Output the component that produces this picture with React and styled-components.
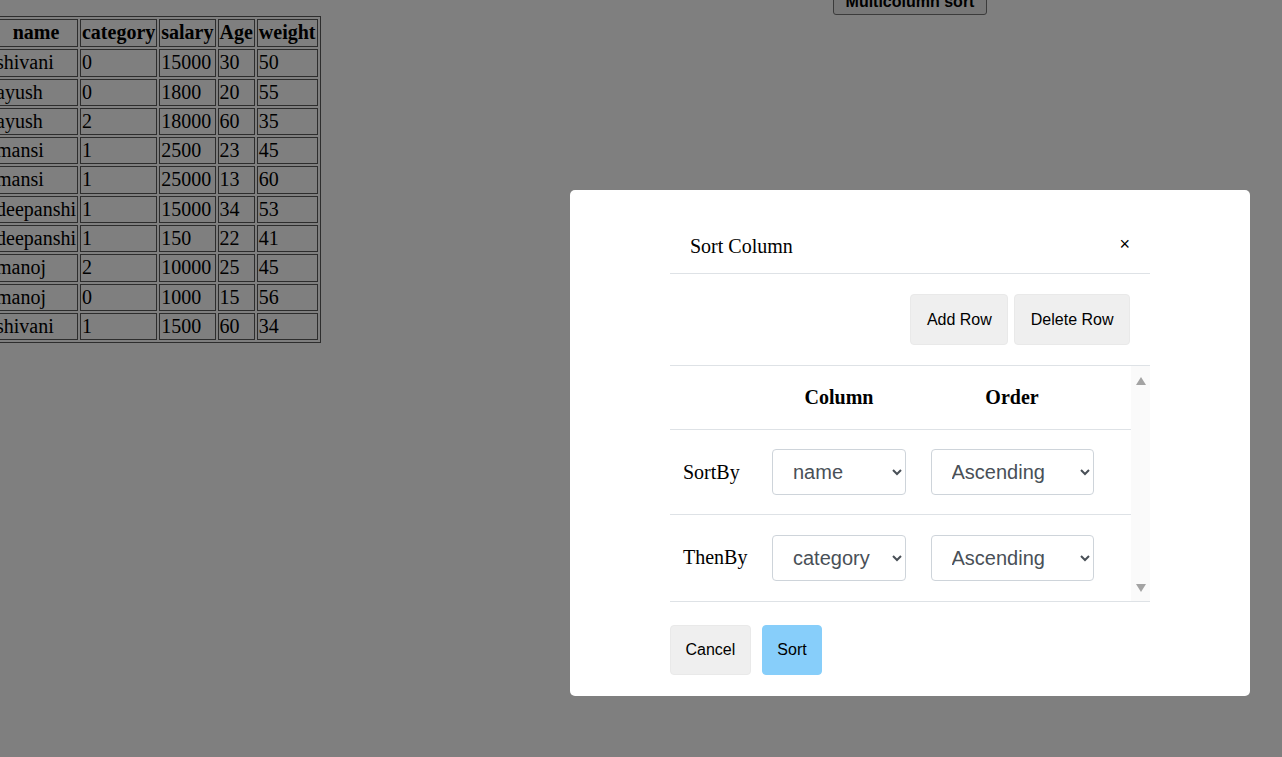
import styled, { createGlobalStyle } from 'styled-components';

const rows = [
  ['shivani', 0, 15000, 30, 50],
  ['ayush', 0, 1800, 20, 55],
  ['ayush', 2, 18000, 60, 35],
  ['mansi', 1, 2500, 23, 45],
  ['mansi', 1, 25000, 13, 60],
  ['deepanshi', 1, 15000, 34, 53],
  ['deepanshi', 1, 150, 22, 41],
  ['manoj', 2, 10000, 25, 45],
  ['manoj', 0, 1000, 15, 56],
  ['shivani', 1, 1500, 60, 34],
];

const sortRows = [
  { label: 'SortBy', column: 'name' },
  { label: 'ThenBy', column: 'category' },
];

const GlobalStyle = createGlobalStyle`
  html, body {
    margin: 0;
    padding: 0;
    background: #fff;
  }
  body {
    font-family: "Liberation Serif", "Times New Roman", serif;
    overflow: hidden;
  }
`;

function App() {
  return (
    <>
      <GlobalStyle />
      <Page>
        <TopBar>
          <MultiButton>Multicolumn sort</MultiButton>
        </TopBar>
        <DataTable>
          <thead>
            <tr>
              <th>name</th>
              <th>category</th>
              <th>salary</th>
              <th>Age</th>
              <th>weight</th>
            </tr>
          </thead>
          <tbody>
            {rows.map((r, i) => (
              <tr key={i}>
                {r.map((c, j) => (
                  <td key={j}>{c}</td>
                ))}
              </tr>
            ))}
          </tbody>
        </DataTable>
      </Page>

      <Overlay>
        <Modal>
          <Header>
            <Title>Sort Column</Title>
            <Close>×</Close>
          </Header>
          <Toolbar>
            <ActionButton>Add Row</ActionButton>
            <ActionButton>Delete Row</ActionButton>
          </Toolbar>
          <ScrollArea>
            <SortGrid>
              <GridRow header>
                <Cell />
                <HeadCell>Column</HeadCell>
                <HeadCell>Order</HeadCell>
                <Cell />
              </GridRow>
              {sortRows.map((r) => (
                <GridRow key={r.label}>
                  <LabelCell>{r.label}</LabelCell>
                  <Cell>
                    <Select width={134} defaultValue={r.column}>
                      <option value="name">name</option>
                      <option value="category">category</option>
                      <option value="salary">salary</option>
                      <option value="Age">Age</option>
                      <option value="weight">weight</option>
                    </Select>
                  </Cell>
                  <Cell>
                    <Select width={163} defaultValue="asc">
                      <option value="asc">Ascending</option>
                      <option value="desc">Descending</option>
                    </Select>
                  </Cell>
                  <Cell />
                </GridRow>
              ))}
            </SortGrid>
            <Scrollbar>
              <svg width="10" height="8" viewBox="0 0 10 8">
                <path d="M5 0 L10 8 L0 8 Z" fill="#a3a3a3" />
              </svg>
              <svg width="10" height="8" viewBox="0 0 10 8">
                <path d="M0 0 L10 0 L5 8 Z" fill="#a3a3a3" />
              </svg>
            </Scrollbar>
          </ScrollArea>
          <Footer>
            <ActionButton small>Cancel</ActionButton>
            <ActionButton small primary>Sort</ActionButton>
          </Footer>
        </Modal>
      </Overlay>
    </>
  );
}

const Page = styled.div`
  width: 100%;
`;

const TopBar = styled.div`
  display: flex;
  padding-left: 833px;
  margin-top: -11px;
`;

const MultiButton = styled.button`
  box-sizing: border-box;
  height: 26px;
  width: 154px;
  padding: 0 7px;
  font: 700 16px "Liberation Sans", Arial, sans-serif;
  color: #000;
  background: #efefef;
  border: 1px solid #767676;
  border-radius: 3px;
`;

const DataTable = styled.table`
  margin: 1px 0 0 -9px;
  border: 1px solid #5a5a5a;
  border-spacing: 2px;
  font: 20px/23.3px "Liberation Serif", "Times New Roman", serif;
  color: #000;

  th,
  td {
    border: 1px solid #5a5a5a;
    padding: 1px;
  }
  th {
    font-weight: 700;
    text-align: center;
    padding: 1px 1px 2px;
  }
  td {
    text-align: left;
  }
`;

const Overlay = styled.div`
  position: fixed;
  inset: 0;
  background: rgba(0, 0, 0, 0.5);
  display: flex;
  justify-content: flex-end;
  align-items: flex-start;
  padding: 190px 32px 0 0;
`;

const Modal = styled.div`
  box-sizing: border-box;
  width: 680px;
  background: #fff;
  border-radius: 5px;
  padding: 30px 100px 21px;
`;

const Header = styled.div`
  display: flex;
  justify-content: space-between;
  align-items: center;
  height: 53px;
  padding: 0 20px;
  border-bottom: 1px solid #dee2e6;
`;

const Title = styled.div`
  font: 20px/23px "Liberation Serif", "Times New Roman", serif;
  color: #000;
`;

const Close = styled.span`
  font: 18px/1 "Liberation Sans", Arial, sans-serif;
  color: #000;
  margin-top: -6px;
`;

const Toolbar = styled.div`
  display: flex;
  justify-content: flex-end;
  gap: 6px;
  padding: 20px;
`;

const ActionButton = styled.button`
  box-sizing: border-box;
  height: ${({ small }) => (small ? '50px' : '51px')};
  padding: ${({ small }) => (small ? '0 14.5px' : '0 15.5px')};
  font: 16px "Liberation Sans", Arial, sans-serif;
  color: #000;
  background: ${({ primary }) => (primary ? '#87cefa' : '#efefef')};
  border: 1px solid ${({ primary }) => (primary ? '#87cefa' : '#e9e9e9')};
  border-radius: 4px;
`;

const ScrollArea = styled.div`
  display: flex;
  border-top: 1px solid #dee2e6;
  border-bottom: 1px solid #dee2e6;
`;

const SortGrid = styled.div`
  flex: 1;
  padding-bottom: 1px;
`;

const GridRow = styled.div`
  box-sizing: border-box;
  display: grid;
  grid-template-columns: 90px 158px 188px 1fr;
  align-items: center;
  height: ${({ header }) => (header ? '64px' : '85px')};
  border-bottom: 1px solid #dee2e6;

  &:last-child {
    border-bottom: none;
  }
`;

const Cell = styled.div`
  display: flex;
  justify-content: center;
`;

const HeadCell = styled.div`
  text-align: center;
  font: 700 20px/23px "Liberation Serif", "Times New Roman", serif;
  color: #000;
`;

const LabelCell = styled.div`
  padding-left: 13px;
  font: 20px/23px "Liberation Serif", "Times New Roman", serif;
  color: #000;
`;

const Select = styled.select`
  box-sizing: border-box;
  width: ${({ width }) => width}px;
  height: 46px;
  padding: 0 8px 0 16px;
  font: 20px "Liberation Sans", Arial, sans-serif;
  color: #495057;
  background: #fff;
  border: 1px solid #ced4da;
  border-radius: 4px;
`;

const Scrollbar = styled.div`
  width: 19px;
  background: #fafafa;
  display: flex;
  flex-direction: column;
  justify-content: space-between;
  align-items: center;
  padding: 11px 0 9px;
`;

const Footer = styled.div`
  display: flex;
  gap: 11px;
  margin-top: 23px;
`;

export default App;
